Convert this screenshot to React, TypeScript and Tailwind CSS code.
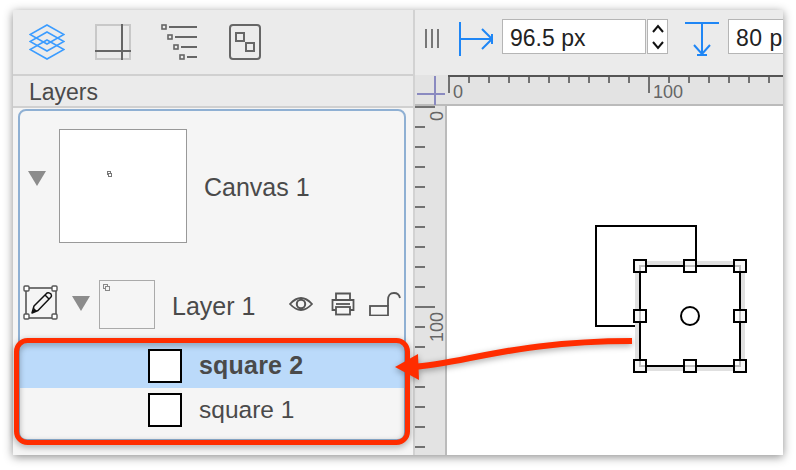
const blue = '#3b9cff';
const gray = '#666666';

function LayersIcon() {
    return (
        <svg width="36" height="36" viewBox="0 0 36 36" fill="none" stroke={blue} strokeWidth="1.6">
            <path d="M18 1 L35 10.5 L18 20 L1 10.5 Z" />
            <path d="M18 8 L35 17.5 L18 27 L1 17.5 Z" />
            <path d="M18 16 L35 25.5 L18 35 L1 25.5 Z" />
        </svg>
    );
}

function GridIcon() {
    return (
        <svg width="36" height="36" viewBox="0 0 36 36" fill="none">
            <rect x="1" y="1" width="34" height="34" stroke="#c8c8c8" strokeWidth="2" />
            <path d="M27 0 V36 M0 27 H36" stroke={gray} strokeWidth="2" />
        </svg>
    );
}

function OutlineIcon() {
    const rows = [0, 1, 2, 3];
    return (
        <svg width="36" height="36" viewBox="0 0 36 36" fill="none" stroke={gray}>
            {rows.map((i) => (
                <g key={i}>
                    <rect x={i * 6 + 1} y={i * 10 + 1} width="4" height="4" strokeWidth="1.6" />
                    <path d={`M${i * 6 + 8} ${i * 10 + 3} H36`} strokeWidth="2" />
                </g>
            ))}
        </svg>
    );
}

function BoxesIcon() {
    return (
        <svg width="32" height="36" viewBox="0 0 32 36" fill="none" stroke={gray} strokeWidth="2">
            <rect x="1" y="1" width="30" height="34" rx="3" />
            <rect x="7" y="9" width="8" height="8" />
            <rect x="17" y="19" width="8" height="8" />
        </svg>
    );
}

function Triangle() {
    return (
        <svg width="18" height="15" viewBox="0 0 18 15" className="shrink-0">
            <path d="M0 0 H18 L9 15 Z" fill="#8c8c8c" />
        </svg>
    );
}

function PencilBox() {
    return (
        <svg width="36" height="36" viewBox="0 0 36 36" fill="none" className="shrink-0">
            <rect x="3" y="3" width="30" height="30" stroke="#555" strokeWidth="1.6" />
            {[
                [0.5, 0.5],
                [28.5, 0.5],
                [0.5, 28.5],
                [28.5, 28.5],
            ].map(([x, y]) => (
                <rect key={`${x}-${y}`} x={x + 0.5} y={y + 0.5} width="5" height="5" rx="1" fill="#fff" stroke="#555" strokeWidth="1.4" />
            ))}
            <path d="M9 28 L11 21 L24 8 Q26 7 28 9 Q29 11 28 12 L15 25.5 Z" stroke="#111" strokeWidth="1.5" strokeLinejoin="round" />
            <path d="M9 28 L11 23 L14 26 Z" fill="#111" />
            <path d="M22 10 L26 14" stroke="#111" strokeWidth="1.5" />
        </svg>
    );
}

function EyeIcon() {
    return (
        <svg width="24" height="18" viewBox="0 0 24 18" fill="none" stroke="#555" strokeWidth="1.8">
            <path d="M1 9 Q12 -3 23 9 Q12 21 1 9 Z" />
            <circle cx="12" cy="9" r="4.2" strokeWidth="2" />
        </svg>
    );
}

function PrinterIcon() {
    return (
        <svg width="24" height="24" viewBox="0 0 24 24" fill="none" stroke="#555" strokeWidth="1.8">
            <path d="M5 8 V1.5 H19 V8" />
            <path d="M5 18 H1.5 V8 H22.5 V18 H19" />
            <rect x="5" y="15" width="14" height="7.5" />
            <path d="M5 12 H19" />
        </svg>
    );
}

function LockIcon() {
    return (
        <svg width="32" height="24" viewBox="0 0 32 24" fill="none" stroke="#555" strokeWidth="1.8">
            <rect x="1" y="14" width="18" height="9.5" />
            <path d="M19 14 V8 Q19 1 25 1 Q30 1 31 6" />
        </svg>
    );
}

function ArrowRightIcon() {
    return (
        <svg width="34" height="34" viewBox="0 0 34 34" fill="none" stroke="#1f86f5" strokeWidth="2">
            <path d="M1 0 V34 M1 17 H33 M23 7 L33 17 L23 27 M33 12 V22" />
        </svg>
    );
}

function ArrowDownIcon() {
    return (
        <svg width="34" height="34" viewBox="0 0 34 34" fill="none" stroke="#1f86f5" strokeWidth="2">
            <path d="M0 1 H34 M17 1 V33 M9 23 L17 32 L25 23 M12 33 H22" />
        </svg>
    );
}

function Stepper() {
    return (
        <div className="flex h-[35px] w-[21px] shrink-0 items-center justify-center border border-[#b5b5b5] bg-white">
            <svg width="12" height="26" viewBox="0 0 12 26" fill="none" stroke="#111" strokeWidth="2">
                <path d="M1 8 L6 2 L11 8 M1 18 L6 24 L11 18" />
            </svg>
        </div>
    );
}

function TopRuler() {
    const ticks = Array.from({ length: 17 }, (_, i) => i);
    return (
        <svg width="336" height="30" viewBox="0 0 336 30" className="block">
            <path d="M1 1 H336" stroke="#555" strokeWidth="2" />
            {ticks.map((i) => (
                <path key={i} d={`M${i * 20 + 2} 1 V${i % 10 === 0 ? 18 : 8}`} stroke="#555" strokeWidth="1.6" />
            ))}
            <text x="6" y="23" fontSize="18" fill="#666" fontFamily="Liberation Sans, sans-serif">0</text>
            <text x="206" y="23" fontSize="18" fill="#666" fontFamily="Liberation Sans, sans-serif">100</text>
        </svg>
    );
}

function LeftRuler() {
    const ticks = Array.from({ length: 18 }, (_, i) => i);
    return (
        <svg width="31" height="349" viewBox="0 0 31 349" className="block">
            {ticks.map((i) => (
                <path key={i} d={`M0 ${i * 20 + 1} H${i % 10 === 0 ? 20 : 10}`} stroke="#555" strokeWidth="1.6" />
            ))}
            <text transform="translate(28 15) rotate(-90)" fontSize="18" fill="#666" fontFamily="Liberation Sans, sans-serif">0</text>
            <text transform="translate(28 236) rotate(-90)" fontSize="18" fill="#666" fontFamily="Liberation Sans, sans-serif">100</text>
        </svg>
    );
}

function CanvasDrawing() {
    // coordinates are page pixels, the view box starts at the canvas corner
    const handles = [
        [640, 266],
        [690, 266],
        [740, 266],
        [640, 316],
        [740, 316],
        [640, 366],
        [690, 366],
        [740, 366],
    ];
    return (
        <svg width="336" height="349" viewBox="447 106 336 349" className="block" fill="none">
            <rect x="596" y="226" width="100" height="100" stroke="#000" strokeWidth="2" />
            <rect x="638" y="264" width="104" height="104" fill="#fff" stroke="#e0e0e0" strokeWidth="6" />
            <rect x="640" y="266" width="100" height="100" stroke="#000" strokeWidth="2" />
            <circle cx="690" cy="316" r="9" fill="#fff" stroke="#000" strokeWidth="2" />
            {handles.map(([x, y]) => (
                <rect key={`${x}-${y}`} x={x - 6} y={y - 6} width="12" height="12" fill="#ffffff" fillOpacity="0.75" stroke="#000" strokeWidth="2" />
            ))}
        </svg>
    );
}

function Annotation() {
    return (
        <svg
            width="796"
            height="470"
            viewBox="0 0 796 470"
            fill="none"
            className="pointer-events-none absolute top-0 left-0 drop-shadow-[0_2px_3px_rgba(0,0,0,0.35)]"
        >
            <rect x="16.5" y="340.5" width="391" height="102" rx="11" stroke="#ff2d00" strokeWidth="5" />
            <path d="M632 341 C560 341 510 350 470 358 C445 363 430 366 412 367" stroke="#ff2d00" strokeWidth="6" />
            <path d="M395 367 L418 354 L419 380 Z" fill="#ff2d00" />
        </svg>
    );
}

export default function App() {
    return (
        <div className="relative h-[470px] w-[796px] overflow-hidden bg-white pt-[10px] pl-[13px] font-['Liberation_Sans',sans-serif] text-[#4a4a4a]">
            <div className="flex h-[445px] w-[770px] shadow-[0_2px_9px_rgba(0,0,0,0.45)]">
                {/* sidebar */}
                <div className="flex w-[402px] shrink-0 flex-col border-r-2 border-[#d2d2d2] bg-[#ebebeb]">
                    <div className="flex h-[66px] shrink-0 items-start border-b-2 border-[#d0d0d0] pt-[14px] pl-[16px]">
                        <LayersIcon />
                        <div className="ml-[30px]">
                            <GridIcon />
                        </div>
                        <div className="ml-[30px]">
                            <OutlineIcon />
                        </div>
                        <div className="ml-[32px]">
                            <BoxesIcon />
                        </div>
                    </div>
                    <div className="flex h-[32px] shrink-0 items-center border-b-2 border-[#d0d0d0] pt-[2px] pl-[16px] text-[23px]">Layers</div>
                    <div className="flex-1 bg-[#f5f5f5] pt-px pl-[5px]">
                        <div className="h-[332px] w-[388px] rounded-[8px] border-2 border-[#8fb0d3] pt-[18px]">
                            <div className="flex">
                                <div className="ml-[8px] flex items-center pb-[16px]">
                                    <Triangle />
                                </div>
                                <div className="relative ml-[13px] h-[114px] w-[128px] border border-[#999] bg-white">
                                    <div className="absolute top-[41px] left-[47px] h-[4px] w-[4px] border border-[#777]" />
                                    <div className="absolute top-[43px] left-[48px] h-[4px] w-[4px] border border-[#777] bg-white" />
                                </div>
                                <div className="ml-[17px] flex items-center pt-[4px] text-[25px]">Canvas 1</div>
                            </div>
                            <div className="mt-[37px] flex h-[49px]">
                                <div className="mt-[5px] ml-[3px]">
                                    <PencilBox />
                                </div>
                                <div className="mt-[16px] ml-[13px]">
                                    <Triangle />
                                </div>
                                <div className="relative ml-[9px] h-[49px] w-[56px] border border-[#aaa]">
                                    <div className="absolute top-[3px] left-[3px] h-[5px] w-[5px] border border-[#888]" />
                                    <div className="absolute top-[5px] left-[5px] h-[5px] w-[5px] border border-[#888] bg-[#f5f5f5]" />
                                </div>
                                <div className="ml-[17px] flex w-[117px] items-center pt-[5px] text-[25px]">Layer 1</div>
                                <div className="mt-[15px]">
                                    <EyeIcon />
                                </div>
                                <div className="mt-[12px] ml-[18px]">
                                    <PrinterIcon />
                                </div>
                                <div className="mt-[12px] ml-[14px]">
                                    <LockIcon />
                                </div>
                            </div>
                            <div className="mt-[14px] flex h-[45px] items-center bg-[#bbdafa] pl-[128px]">
                                <div className="h-[34px] w-[34px] border-2 border-black bg-white" />
                                <span className="ml-[17px] text-[25px] font-bold tracking-[0.2px]">square 2</span>
                            </div>
                            <div className="flex h-[44px] items-center pl-[128px]">
                                <div className="h-[34px] w-[34px] border-2 border-black bg-white" />
                                <span className="ml-[17px] text-[24.5px]">square 1</span>
                            </div>
                        </div>
                    </div>
                </div>
                {/* document */}
                <div className="flex flex-1 flex-col overflow-hidden">
                    <div className="flex h-[65px] shrink-0 bg-[#ebebeb] pt-[9px]">
                        <div className="mt-[10px] ml-[10px] flex h-[19px] gap-[4px]">
                            <div className="h-full w-[2px] bg-[#777]" />
                            <div className="h-full w-[2px] bg-[#777]" />
                            <div className="h-full w-[2px] bg-[#777]" />
                        </div>
                        <div className="mt-[3px] ml-[20px]">
                            <ArrowRightIcon />
                        </div>
                        <div className="ml-[9px] flex h-[35px] w-[144px] shrink-0 items-center border border-[#b5b5b5] bg-white pt-[3px] pl-[7px] text-[23px] text-[#222]">96.5 px</div>
                        <div className="ml-px">
                            <Stepper />
                        </div>
                        <div className="mt-[3px] ml-[17px]">
                            <ArrowDownIcon />
                        </div>
                        <div className="ml-[9px] flex h-[35px] w-[70px] shrink-0 items-center border border-[#b5b5b5] bg-white pt-[3px] pl-[7px] text-[23px] tracking-[0.5px] text-[#222]">80 px</div>
                    </div>
                    <div className="flex h-[31px] shrink-0 border-b-2 border-[#bbb] bg-[#e3e3e3]">
                        <div className="relative w-[32px] shrink-0">
                            <div className="absolute top-[18px] left-[2px] h-[2px] w-[28px] bg-[#8a8ac0]" />
                            <div className="absolute top-px left-[19px] h-[29px] w-[2px] bg-[#8a8ac0]" />
                        </div>
                        <TopRuler />
                    </div>
                    <div className="flex flex-1">
                        <div className="w-[32px] shrink-0 border-r-2 border-[#bbb] bg-[#e3e3e3]">
                            <LeftRuler />
                        </div>
                        <div className="flex-1 bg-white">
                            <CanvasDrawing />
                        </div>
                    </div>
                </div>
            </div>
            <Annotation />
        </div>
    );
}
